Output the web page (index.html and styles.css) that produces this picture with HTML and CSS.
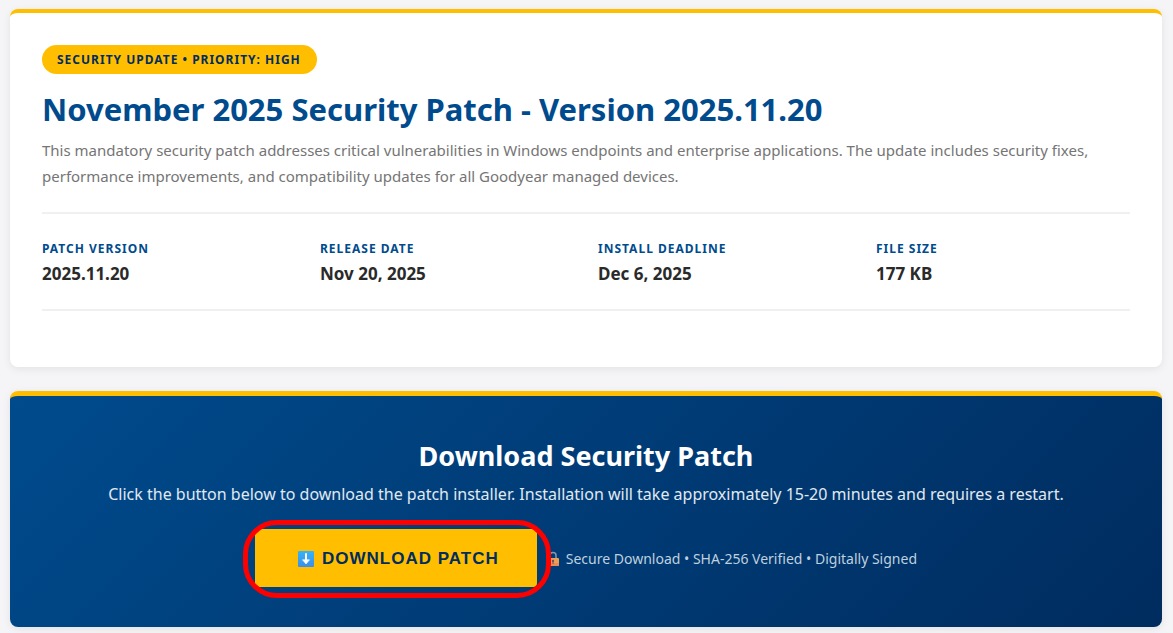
FILE: index.html
```html
<!DOCTYPE html>
<html lang="en">
<head>
<meta charset="utf-8">
<meta name="viewport" content="width=device-width, initial-scale=1">
<title>November 2025 Security Patch</title>
<link rel="stylesheet" href="styles.css">
</head>
<body>
<main class="page">
  <section class="card">
    <span class="badge">SECURITY UPDATE • PRIORITY: HIGH</span>
    <h1 class="title">November 2025 Security Patch - Version 2025.11.20</h1>
    <p class="description">This mandatory security patch addresses critical vulnerabilities in Windows endpoints and enterprise applications. The update includes security fixes, performance improvements, and compatibility updates for all Goodyear managed devices.</p>
    <dl class="facts">
      <div class="fact"><dt>PATCH VERSION</dt><dd>2025.11.20</dd></div>
      <div class="fact"><dt>RELEASE DATE</dt><dd>Nov 20, 2025</dd></div>
      <div class="fact"><dt>INSTALL DEADLINE</dt><dd>Dec 6, 2025</dd></div>
      <div class="fact"><dt>FILE SIZE</dt><dd>177 KB</dd></div>
    </dl>
  </section>
  <section class="download">
    <h2 class="download-title">Download Security Patch</h2>
    <p class="download-text">Click the button below to download the patch installer. Installation will take approximately 15-20 minutes and requires a restart.</p>
    <div class="actions">
      <div class="button-wrap">
        <button class="button" type="button">
          <svg class="arrow" viewBox="0 0 18 18" aria-hidden="true">
            <defs><linearGradient id="sky" x1="0" y1="0" x2="0" y2="1"><stop offset="0" stop-color="#35b4f8"/><stop offset="1" stop-color="#3c8eea"/></linearGradient></defs>
            <rect x="1" y="1" width="16" height="16" rx="1" fill="url(#sky)"/>
            <path d="M9 4v8" stroke="#fff" stroke-width="2" fill="none" stroke-linecap="round"/>
            <path d="M5.5 9.8h7L9 14z" fill="#fff" stroke="#fff" stroke-width="0.6" stroke-linejoin="round"/>
          </svg>
          <span>DOWNLOAD PATCH</span>
        </button>
        <span class="ring"></span>
      </div>
      <p class="secure">
        <svg class="lock" viewBox="0 0 12 16" aria-hidden="true">
          <path d="M3 8V4.5a3 3 0 0 1 6 0V8" fill="none" stroke="#8799ad" stroke-width="1.5"/>
          <rect x="0" y="7" width="12" height="8" rx="1" fill="#eda055"/>
          <path d="M0 12h12v2a1 1 0 0 1-1 1H1a1 1 0 0 1-1-1z" fill="#e88b55"/>
          <circle cx="6" cy="10" r="1.2" fill="#6b5060"/><path d="M6 10v3" stroke="#6b5060" stroke-width="1"/>
        </svg>
        <span>Secure Download • SHA-256 Verified • Digitally Signed</span>
      </p>
    </div>
  </section>
</main>
</body>
</html>
```
FILE: styles.css
```css
* { box-sizing: border-box; }
body {
  margin: 0;
  background: #f5f5f8;
  color: #2a2a2a;
  font-family: "Noto Sans", "Open Sans", sans-serif;
}
h1, h2, p, dl, dd { margin: 0; }
.page {
  display: flex;
  flex-direction: column;
  gap: 24px;
  padding: 9px 11px 6px 10px;
}
.card {
  padding: 32px 32px 56px;
  border-top: 4px solid #ffbf00;
  border-radius: 8px;
  background: #fff;
  box-shadow: 0 2px 8px rgba(0, 0, 0, 0.08);
}
.badge {
  display: block;
  width: fit-content;
  padding: 1px 16px 0 15px;
  border-radius: 15px;
  background: #ffbf00;
  color: #002c5f;
  font-size: 12px;
  font-weight: 700;
  line-height: 28px;
  letter-spacing: 1px;
}
.title {
  margin-top: 11px;
  color: #004b8d;
  font-size: 31px;
  font-weight: 700;
  line-height: 48px;
}
.description {
  margin-top: 4px;
  color: #757575;
  font-size: 15px;
  line-height: 26px;
}
.facts {
  display: grid;
  grid-template-columns: repeat(4, 1fr);
  gap: 24px;
  margin-top: 23px;
  padding: 24px 0 22px;
  border-top: 2px solid #f0f0f2;
  border-bottom: 2px solid #f0f0f2;
}
.fact dt {
  color: #004b8d;
  font-size: 12px;
  font-weight: 700;
  line-height: 22px;
  letter-spacing: 1px;
}
.fact dd {
  font-size: 17px;
  font-weight: 700;
  line-height: 27px;
}
.download {
  padding: 40px 32px;
  border-top: 5px solid #ffbf00;
  border-radius: 8px;
  background: linear-gradient(135deg, #004b8d, #002c5f) border-box;
  box-shadow: 0 2px 8px rgba(0, 0, 0, 0.08);
  color: #fff;
  text-align: center;
}
.download-title {
  font-size: 27px;
  font-weight: 700;
  line-height: 40px;
}
.download-text {
  margin-top: 5px;
  color: #e0e9f1;
  font-size: 16px;
  line-height: 26px;
}
.actions {
  display: flex;
  align-items: center;
  justify-content: center;
  gap: 10px;
  margin-top: 22px;
}
.button-wrap { position: relative; }
.button {
  display: flex;
  align-items: center;
  gap: 7px;
  padding: 20px 38px 18px 42px;
  border: 0;
  border-radius: 4px;
  background: #ffbf00;
  color: #002c5f;
  font: 700 17px/20px "Liberation Sans", Arial, sans-serif;
  letter-spacing: 1px;
}
.arrow { width: 18px; height: 18px; }
.ring {
  position: absolute;
  inset: -9px -14px -11px -12px;
  border: 5px solid #f00;
  border-radius: 34px;
  pointer-events: none;
}
.secure {
  display: flex;
  align-items: center;
  gap: 7px;
  padding-top: 2px;
  color: #bfd0df;
  font-size: 14px;
  line-height: 22px;
}
.lock { width: 12px; height: 16px; }
```
